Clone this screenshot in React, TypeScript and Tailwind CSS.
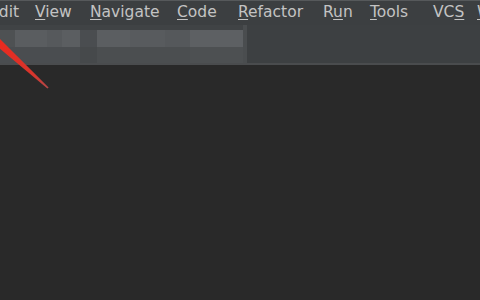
import React from "react";

const menus = [
  { pre: "E", u: "", post: "dit", w: "w-[46px]", ml: "-ml-[11px]" },
  { pre: "", u: "V", post: "iew", w: "w-[55px]", ml: "" },
  { pre: "", u: "N", post: "avigate", w: "w-[87px]", ml: "" },
  { pre: "", u: "C", post: "ode", w: "w-[61px]", ml: "" },
  { pre: "", u: "R", post: "efactor", w: "w-[85px]", ml: "" },
  { pre: "R", u: "u", post: "n", w: "w-[47px]", ml: "" },
  { pre: "", u: "T", post: "ools", w: "w-[63px]", ml: "" },
  { pre: "VC", u: "S", post: "", w: "w-[44px]", ml: "" },
  { pre: "", u: "W", post: "indow", w: "w-[80px]", ml: "" },
];

// pixelated (blurred-out) path in the toolbar
const blocks = [
  { w: "w-[15px]", c: "bg-[#4e5153]" },
  { w: "w-[32px]", c: "bg-[#5a5d60]" },
  { w: "w-[15px]", c: "bg-[#56595c]" },
  { w: "w-[18px]", c: "bg-[#5b5e61]" },
  { w: "w-[17px]", c: "bg-[#4a4d50]" },
  { w: "w-[33px]", c: "bg-[#5b5e61]" },
  { w: "w-[35px]", c: "bg-[#585b5e]" },
  { w: "w-[25px]", c: "bg-[#55585b]" },
  { w: "w-[53px]", c: "bg-[#5d6063]" },
];

export default function App() {
  return (
    <div className="relative w-[480px] h-[300px] overflow-hidden bg-[#292929] font-['DejaVu_Sans',sans-serif]">
      {/* menu bar */}
      <div className="h-[1px] bg-[#56595b]" />
      <div className="flex h-[24px] items-center bg-[#3c3f41] text-[15.5px] text-[#c3c3c3] whitespace-nowrap">
        {menus.map((m, i) => (
          <span key={i} className={`shrink-0 ${m.w} ${m.ml}`}>
            {m.pre}
            {m.u && <u className="underline-offset-2">{m.u}</u>}
            {m.post}
          </span>
        ))}
      </div>

      {/* toolbar */}
      <div className="flex h-[38px] bg-[#3f4244]">
        <div className="flex w-[243px] flex-col bg-[#46494b]">
          <div className="h-[5px] bg-[#404345]" />
          <div className="flex h-[17px]">
            {blocks.map((b, i) => (
              <div key={i} className={`${b.w} ${b.c}`} />
            ))}
          </div>
          <div className="flex h-[16px]">
            <div className="w-[80px] bg-[#4a4d50]" />
            <div className="w-[17px] bg-[#46494b]" />
            <div className="w-[93px] bg-[#4b4e50]" />
            <div className="w-[53px] bg-[#4d5052]" />
          </div>
        </div>
        <div className="w-[4px] bg-[#4a4d4f]" />
        <div className="flex-1 bg-[#3d4042]" />
      </div>
      <div className="h-[2px] bg-[#4a4c4e]" />

      {/* red annotation arrow */}
      <svg className="absolute left-0 top-0" width="60" height="100" viewBox="0 0 60 100">
        <defs>
          <linearGradient id="ar" x1="0" y1="40" x2="48" y2="88" gradientUnits="userSpaceOnUse">
            <stop offset="0" stopColor="#ea2a1f" />
            <stop offset="0.7" stopColor="#d8352c" />
            <stop offset="1" stopColor="#b24848" />
          </linearGradient>
        </defs>
        <polygon points="-2,37 -7,43 47.4,88.6 48.6,87.4" fill="url(#ar)" />
      </svg>
    </div>
  );
}
